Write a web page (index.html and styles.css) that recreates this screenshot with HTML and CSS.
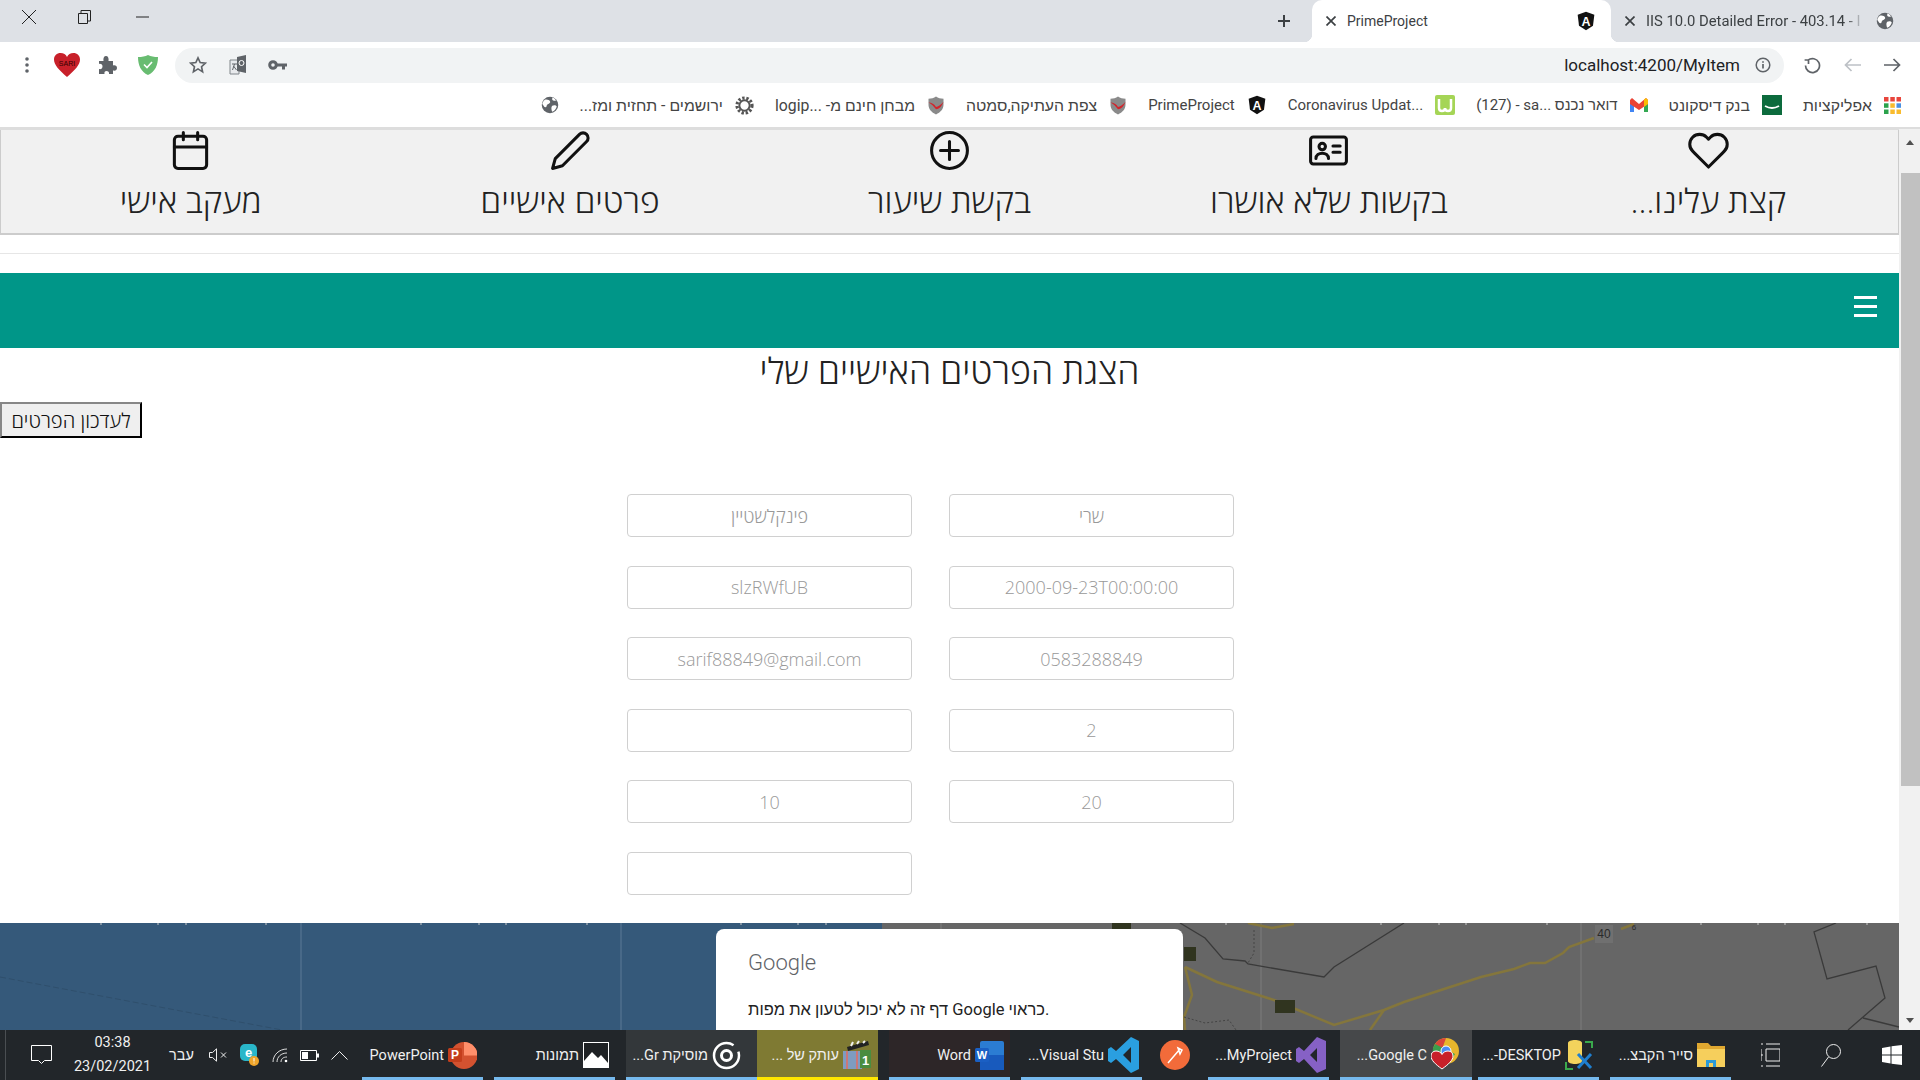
FILE: index.html
```html
<!DOCTYPE html>
<html lang="he">
<head>
    <meta charset="UTF-8">
    <title>PrimeProject</title>
    <link rel="stylesheet" href="styles.css">
</head>
<body>

    <svg class="defs" width="0" height="0">
        <symbol id="globe" viewBox="0 0 24 24">
            <circle cx="12" cy="12" r="11" fill="#5f6368"/>
            <path d="M5 5c3-1 6 0 7 2s-1 3-3 4-1 4-3 4-3-3-4-4 1-4 3-6zM15 13c2-1 5-1 6 1-1 3-3 6-6 7-1-2-2-6 0-8zM15 2c2 0 4 2 5 4-2 1-4 0-5-1z" fill="#fff"/>
        </symbol>
        <symbol id="bird" viewBox="0 0 24 24">
            <path d="M2 3c4 0 7-1 10-3 3 2 6 3 10 3v8c0 6-4 10-10 13C6 21 2 17 2 11z" fill="#8a8a8a"/>
            <path d="M2 8c4 0 8 2 10 6 3-1 6-2 10-7-2 6-6 10-10 10C9 13 6 10 2 8z" fill="#d3232a"/>
        </symbol>
    </svg>

    <div class="tabstrip">
        <div class="win-controls">
            <svg class="win-close" width="14" height="14" viewBox="0 0 14 14"><path d="M0 0l14 14M14 0 0 14" stroke="#222" fill="none"/></svg>
            <svg class="win-restore" width="13" height="14" viewBox="0 0 13 14"><path d="M.5 3.500h9v10h-9zM3 3.500V.5h9.500V11H9.500" stroke="#222" fill="none"/></svg>
            <svg class="win-min" width="13" height="2" viewBox="0 0 13 2"><path d="M0 1h13" stroke="#222" fill="none"/></svg>
        </div>
        <svg class="new-tab" width="14" height="14" viewBox="0 0 14 14"><path d="M7 1v12M1 7h12" stroke="#3c4043" stroke-width="2" fill="none"/></svg>
        <div class="tab tab-active">
            <svg class="tab-x" width="10" height="10" viewBox="0 0 10 10"><path d="M.5.500l9 9M9.500.500l-9 9" stroke="#3c4043" stroke-width="1.700" fill="none"/></svg>
            <span class="tab-title">PrimeProject</span>
            <svg class="tab-icon" width="20" height="20" viewBox="0 0 24 24"><path d="M12 1 2 4.600l1.600 13L12 23l8.400-5.400 1.600-13z" fill="#111"/><text x="12" y="17.500" text-anchor="middle" font-family="Liberation Sans" font-weight="700" font-size="15" fill="#fff">A</text></svg>
        </div>
        <div class="tab tab-other">
            <svg class="tab-x" width="10" height="10" viewBox="0 0 10 10"><path d="M.5.500l9 9M9.500.500l-9 9" stroke="#3c4043" stroke-width="1.700" fill="none"/></svg>
            <span class="tab-title tab-fade">IIS 10.0 Detailed Error - 403.14 - I</span>
            <svg class="tab-icon" width="18" height="18"><use href="#globe"/></svg>
        </div>
    </div>

    <div class="toolbar">
        <div class="ext-icons">
            <svg width="4" height="16" viewBox="0 0 4 16"><circle cx="2" cy="2" r="1.800" fill="#5f6368"/><circle cx="2" cy="8" r="1.800" fill="#5f6368"/><circle cx="2" cy="14" r="1.800" fill="#5f6368"/></svg>
            <svg class="ext-heart" width="26" height="24" viewBox="0 0 26 24"><path d="M13 24C5 17 0 12 0 6.500 0 2.500 3 0 6.500 0 9.500 0 12 1.500 13 4c1-2.500 3.500-4 6.500-4C23 0 26 2.500 26 6.500 26 12 21 17 13 24z" fill="#c8202a"/><text x="13" y="13" text-anchor="middle" font-family="Liberation Sans" font-size="7" fill="#300">SARI</text></svg>
            <svg class="ext-puzzle" width="18" height="18" viewBox="0 0 18 18"><path d="M0 5h4.500C4 2 5 0 7 0s3 2 2.500 5H14v4.500c2.500-.5 4 .5 4 2.500s-1.500 3-4 2.500V18h-4c.5-2-1-3-2.500-3S5 16 5.500 18H0v-5c2 .5 3.500-.5 3.500-2.500S2 7.500 0 8z" fill="#5f6368"/></svg>
            <svg class="ext-shield" width="20" height="20" viewBox="0 0 20 20"><path d="M10 0c3 1.500 6 2 10 2 0 8-3 15-10 18C3 17 0 10 0 2c4 0 7-.5 10-2z" fill="#68bc71"/><path d="M6 9.500l3 3 5-5.500" stroke="#fff" stroke-width="1.600" fill="none"/></svg>
        </div>
        <div class="omnibox">
            <svg class="omni-star" width="18" height="18" viewBox="0 0 24 24"><path d="M12 2.500l2.900 6.300 6.900.8-5.100 4.700 1.400 6.800L12 17.200l-6.100 3.900 1.400-6.800-5.100-4.700 6.900-.8z" stroke="#5f6368" stroke-width="2.200" fill="none"/></svg>
            <svg class="omni-translate" width="18" height="20" viewBox="0 0 18 20"><path d="M1 5h9v14H1z" fill="#e8eaed" stroke="#80868b"/><path d="M8 2l9-2v18l-9-2z" fill="#5f6368"/><circle cx="12.500" cy="8" r="2.500" fill="none" stroke="#fff"/><path d="M3 9h5M5.500 9l-2 6M4.500 11l3 4" stroke="#5f6368" fill="none"/></svg>
            <svg class="omni-key" width="19" height="10" viewBox="0 0 19 10"><circle cx="5" cy="5" r="3.300" fill="none" stroke="#5f6368" stroke-width="3"/><path d="M8 3.500h11v3h-2v3h-3v-3H8z" fill="#5f6368"/></svg>
            <span class="url">localhost:4200/MyItem</span>
            <svg class="omni-info" width="16" height="16" viewBox="0 0 16 16"><circle cx="8" cy="8" r="6.800" fill="none" stroke="#5f6368" stroke-width="1.500"/><path d="M8 7v4.500M8 4.200v1.600" stroke="#5f6368" stroke-width="1.700" fill="none"/></svg>
        </div>
        <div class="nav-buttons">
            <svg width="17" height="17" viewBox="0 0 17 17"><path d="M4 3.200A7 7 0 1 1 1.500 8.500M4.500 7V3H.6" stroke="#5f6368" stroke-width="1.700" fill="none"/></svg>
            <svg width="17" height="14" viewBox="0 0 17 14"><path d="M17 7H1.500M7.500 1 1.500 7l6 6" stroke="#bdc1c6" stroke-width="1.700" fill="none"/></svg>
            <svg width="17" height="14" viewBox="0 0 17 14"><path d="M0 7h15.500M9.500 1l6 6-6 6" stroke="#5f6368" stroke-width="1.700" fill="none"/></svg>
        </div>
    </div>

    <div class="bookmarks">
        <svg class="bm-globe" width="18" height="18"><use href="#globe"/></svg>
        <div class="bm"><span dir="rtl">ירושמים - תחזית ומז...</span>
            <svg width="19" height="19" viewBox="0 0 24 24"><circle cx="12" cy="12" r="6.500" fill="none" stroke="#555" stroke-width="2.500"/><circle cx="12" cy="12" r="9.500" fill="none" stroke="#555" stroke-width="4" stroke-dasharray="3 2.200"/></svg>
        </div>
        <div class="bm"><span dir="rtl">מבחן חינם מ- ...logip</span>
            <svg width="18" height="19"><use href="#bird"/></svg>
        </div>
        <div class="bm"><span dir="rtl">צפת העתיקה,סמטה</span>
            <svg width="18" height="19"><use href="#bird"/></svg>
        </div>
        <div class="bm"><span>PrimeProject</span>
            <svg width="20" height="20" viewBox="0 0 24 24"><path d="M12 1 2 4.600l1.600 13L12 23l8.400-5.400 1.600-13z" fill="#111"/><text x="12" y="17.500" text-anchor="middle" font-family="Liberation Sans" font-weight="700" font-size="15" fill="#fff">A</text></svg>
        </div>
        <div class="bm"><span>Coronavirus Updat...</span>
            <svg width="20" height="20" viewBox="0 0 20 20"><rect width="20" height="20" rx="2" fill="#a5d556"/><path d="M4 4v9q0 3 3 3t3-3q0 3 3 3t3-3V4" fill="none" stroke="#fff" stroke-width="2.500"/></svg>
        </div>
        <div class="bm"><span>(127) - sa... דואר נכנס</span>
            <svg width="18" height="14" viewBox="0 0 18 14"><path d="M0 2v12h4V6z" fill="#4285f4"/><path d="M18 2v12h-4V6z" fill="#34a853"/><path d="M0 2l2-2 7 6 7-6 2 2v4l-9 6-9-6z" fill="#ea4335"/><path d="M14 1.500 16 0l2 2v4l-4 3z" fill="#fbbc04"/></svg>
        </div>
        <div class="bm"><span dir="rtl">בנק דיסקונט</span>
            <svg width="20" height="20" viewBox="0 0 20 20"><rect width="20" height="20" fill="#0c6b3d"/><path d="M3 11q7 4 14 0" stroke="#fff" stroke-width="1.800" fill="none"/></svg>
        </div>
        <div class="bm"><span dir="rtl">אפליקציות</span>
            <svg width="17" height="17" viewBox="0 0 17 17"><path d="M0 0h4.500v4.500H0z" fill="#e8453c"/><path d="M6.300 0h4.500v4.500H6.300z" fill="#e8453c"/><path d="M12.500 0H17v4.500h-4.500z" fill="#e8453c"/><path d="M0 6.300h4.500v4.500H0z" fill="#2ba24c"/><path d="M6.300 6.300h4.500v4.500H6.300z" fill="#f9bb2d"/><path d="M12.500 6.300H17v4.500h-4.500z" fill="#4a90e2"/><path d="M0 12.500h4.500V17H0z" fill="#2ba24c"/><path d="M6.300 12.500h4.500V17H6.300z" fill="#f9bb2d"/><path d="M12.500 12.500H17V17h-4.500z" fill="#f9bb2d"/></svg>
        </div>
    </div>

    <div class="viewport">
        <div class="page">
            <nav class="topnav" dir="rtl">
                <a class="topnav-item">
                    <svg class="topnav-icon" viewBox="0 0 24 24"><path d="M20.840 4.610a5.500 5.500 0 0 0-7.780 0L12 5.670l-1.060-1.060a5.500 5.500 0 0 0-7.780 7.780l1.060 1.060L12 21.230l7.780-7.780 1.060-1.060a5.500 5.500 0 0 0 0-7.780z"/></svg>
                    <span>קצת עלינו...</span>
                </a>
                <a class="topnav-item">
                    <svg class="topnav-icon" viewBox="0 0 24 24"><rect x="2" y="4.500" width="20" height="15" rx="1.500"/><circle cx="8.500" cy="9.800" r="1.800"/><path d="M5 16.500c0-4 7-4 7 0M14.500 9.500h4M14.500 13h4"/></svg>
                    <span>בקשות שלא אושרו</span>
                </a>
                <a class="topnav-item">
                    <svg class="topnav-icon" viewBox="0 0 24 24"><circle cx="12" cy="12" r="10"/><path d="M12 7v10M7 12h10"/></svg>
                    <span>בקשת שיעור</span>
                </a>
                <a class="topnav-item">
                    <svg class="topnav-icon" viewBox="0 0 24 24"><path d="M17 3a2.828 2.828 0 1 1 4 4L7.500 20.500 2 22l1.500-5.500L17 3z"/></svg>
                    <span>פרטים אישיים</span>
                </a>
                <a class="topnav-item">
                    <svg class="topnav-icon" viewBox="0 0 24 24"><rect x="3" y="4" width="18" height="18" rx="2"/><path d="M16 2v4M8 2v4M3 10h18"/></svg>
                    <span>מעקב אישי</span>
                </a>
            </nav>
            <hr class="divider">
            <div class="teal-bar">
                <div class="burger"><span></span><span></span><span></span></div>
            </div>
            <h2 class="title">הצגת הפרטים האישיים שלי</h2>
            <button class="update-btn">לעדכון הפרטים</button>

            <div class="form-grid" dir="rtl">
                <div class="field">שרי</div>
                <div class="field">פינקלשטיין</div>
                <div class="field">2000-09-23T00:00:00</div>
                <div class="field">slzRWfUB</div>
                <div class="field">0583288849</div>
                <div class="field">sarif88849@gmail.com</div>
                <div class="field">2</div>
                <div class="field"></div>
                <div class="field">20</div>
                <div class="field">10</div>
                <div class="field field-last"></div>
            </div>

            <div class="map">
                <svg class="map-art" width="1901" height="107" viewBox="0 0 1901 107">
                    <rect width="882" height="107" fill="#35597a"/>
                    <rect x="882" width="1019" height="107" fill="#666"/>
                    <path d="M301 0v107M621 0v107" stroke="#5d7b96" fill="none"/>
                    <path d="M941 0v107M1261 0v107M1581 0v107" stroke="#7d7d7d" fill="none"/>
                    <path d="M0 54 282 107" stroke="#2f4f6c" stroke-dasharray="6 3" fill="none"/>
                    <path d="M101 0v2M158 0v2M186 0v2M266 0v2M421 0v2M479 0v2M506 0v2M587 0v2M741 0v2M798 0v2M826 0v2M1226 0v2M1381 0v2M1439 0v2M1466 0v2M1547 0v2M1701 0v2M1758 0v2M1785 0v2M1867 0v2" stroke="#c8c8c8" fill="none"/>
                    <path d="M1180 0l25 15 18 21 22 2 3 3 76 13 10-10 70-44M1836 0l-22 9 13 47 49-13 9 32-37 32M1863 95l36 9" stroke="#3a3a3a" stroke-width="1.300" fill="none"/>
                    <path d="M1185 44l32 15 57 18 60 25 50-15 20-8 77-25 33-8 16-6h15l18-10 6-6 25-9M1621 6l13-5M1185 44l7 28-8 22 1 13M1384 87l-14 20M1248 0l24 5 22-4" stroke="#84763c" stroke-width="2.500" fill="none"/>
                    <path d="M1254 7v23l-6 10M1184 94l21 6 24-3 7 10" stroke="#444" stroke-dasharray="2 2" fill="none"/>
                    <path d="M1275 77h20v13h-20zM1184 24h12v14h-12zM1112 0h19v7h-19z" fill="#30341f"/>
                    <rect x="1595" y="2" width="18" height="18" fill="#707070"/>
                    <text x="1604" y="15" text-anchor="middle" font-family="Liberation Sans" font-size="12" fill="#2a2a2a">40</text>
                    <text x="1634" y="7" text-anchor="middle" font-family="Liberation Sans" font-size="8" fill="#2a2a2a">6</text>
                </svg>
                <div class="maps-dialog">
                    <div class="maps-logo">Google</div>
                    <p class="maps-msg">דף זה לא יכול לטעון את מפות Google כראוי.</p>
                </div>
            </div>
        </div>
        <div class="scrollbar">
            <div class="scroll-up"></div>
            <div class="scroll-thumb"></div>
            <div class="scroll-down"></div>
        </div>
    </div>

    <div class="taskbar">
        <div class="tray">
            <svg class="tray-note" width="21" height="20" viewBox="0 0 21 20"><path d="M.5.5h20v15h-7l-3 3-3-3h-7z" stroke="#fff" fill="none"/></svg>
            <div class="clock"><span>03:38</span><span>23/02/2021</span></div>
            <span class="tray-lang">עבר</span>
            <svg class="tray-vol" width="19" height="14" viewBox="0 0 19 14"><path d="M.5 4.500h3L7.500.8v12.400l-4-3.700h-3zM12 4.500l5 5M17 4.500l-5 5" stroke="#eee" fill="none"/></svg>
            <svg class="tray-eset" width="19" height="22" viewBox="0 0 19 22"><rect width="17" height="17" rx="5" fill="#29b6c9"/><text x="8.500" y="13" text-anchor="middle" font-family="Liberation Sans" font-weight="700" font-size="13" fill="#fff">e</text><circle cx="14" cy="17" r="5" fill="#f0a52a"/><path d="M14 14v3.500M14 18.500v1" stroke="#fff" fill="none"/></svg>
            <svg class="tray-wifi" width="16" height="15" viewBox="0 0 16 15"><path d="M1 14C1 7 7 1 15 1M5 14c0-5 4-9 10-9M9 14c0-3 2-5 6-5" stroke="#ddd" fill="none"/><circle cx="14" cy="13" r="1.300" fill="#fff"/></svg>
            <svg class="tray-batt" width="19" height="11" viewBox="0 0 19 11"><path d="M.5.500h16v10H.5z" stroke="#fff" fill="none"/><path d="M2 2h6v7H2z" fill="#fff"/><path d="M17 3.500h2v4h-2z" fill="#fff"/></svg>
            <svg class="tray-up" width="17" height="9" viewBox="0 0 17 9"><path d="M.5 8.500l8-8 8 8" stroke="#eee" fill="none"/></svg>
        </div>

        <div class="task"><span>PowerPoint</span>
            <svg width="29" height="29" viewBox="0 0 29 29"><circle cx="16" cy="14.500" r="13.500" fill="#d35230"/><path d="M16 14.500V1a13.500 13.500 0 0 1 13.500 13.500z" fill="#ff8f6b"/><rect y="7" width="14" height="14" rx="1.500" fill="#c43e1c"/><text x="7" y="18" text-anchor="middle" font-family="Liberation Sans" font-weight="700" font-size="12" fill="#fff">P</text></svg>
        </div>
        <div class="task"><span>תמונות</span>
            <svg width="26" height="26" viewBox="0 0 26 26"><rect width="26" height="26" fill="#fff"/><rect x="1" y="1" width="24" height="24" fill="#1e2124"/><path d="M1 25V19L9 10l6 6 3-3 7 8v4z" fill="#fff"/></svg>
        </div>
        <div class="task task-open"><span dir="rtl">מוסיקת Gr...</span>
            <svg width="29" height="29" viewBox="0 0 29 29"><circle cx="14.500" cy="14.500" r="12.500" fill="none" stroke="#fff" stroke-width="2.500" stroke-dasharray="66 8"/><circle cx="14.500" cy="14.500" r="5" fill="none" stroke="#fff" stroke-width="3"/></svg>
        </div>
        <div class="task task-flash"><span dir="rtl">עותק של ...</span>
            <svg width="28" height="30" viewBox="0 0 28 30"><path d="M4 7 25 1l1 4L5 11z" fill="#222"/><path d="M8 6l2-4M14 4l2-3M20 3l2-2" stroke="#eee" stroke-width="2" fill="none"/><rect y="11" width="19" height="18" fill="#7e9cc0"/><path d="M4 11v18M14 11v18" stroke="#c77" stroke-width="2" fill="none"/><rect x="17" y="10" width="11" height="18" fill="#4a8c3f"/><text x="22.500" y="25" text-anchor="middle" font-family="Liberation Sans" font-weight="700" font-size="13" fill="#fff">1</text></svg>
        </div>
        <div class="task task-word"><span>Word</span>
            <svg width="29" height="29" viewBox="0 0 29 29"><rect x="5" width="24" height="29" rx="2" fill="#2b7cd3"/><rect x="5" y="14" width="24" height="15" fill="#185abd"/><rect y="7" width="14" height="14" rx="1.500" fill="#1a5fc4"/><text x="7" y="18" text-anchor="middle" font-family="Liberation Sans" font-weight="700" font-size="11" fill="#fff">W</text></svg>
        </div>
        <div class="task task-tight"><span dir="rtl">Visual Stu...</span>
            <svg width="31" height="36" viewBox="0 0 31 36"><path d="M23 0 31 4v28l-8 4L8 22l-5 4-3-2v-12l3-2 5 4zM23 10l-8 8 8 8z" fill="#2a9fe0"/></svg>
        </div>
        <div class="task task-icon">
            <svg width="30" height="30" viewBox="0 0 30 30"><circle cx="15" cy="15" r="15" fill="#f26b3a"/><path d="M8 23 20 9M18 8l4 2-2 4z" stroke="#fff" stroke-width="1.500" fill="none"/></svg>
        </div>
        <div class="task task-tight"><span dir="rtl">MyProject...</span>
            <svg width="30" height="36" viewBox="0 0 30 36"><path d="M21 0 30 4v28l-9 4L8 22l-5 4-3-2V12l3-2 5 4zM21 11l-7 7 7 7z" fill="#8661c5"/></svg>
        </div>
        <div class="task task-active"><span dir="rtl">Google C...</span>
            <svg width="28" height="36" viewBox="0 0 28 36"><circle cx="15" cy="14" r="13" fill="#e8b62c"/><path d="M15 1a13 13 0 0 0-11 6l6 8z" fill="#d9453a"/><path d="M4 7a13 13 0 0 0 14 20l6-10z" fill="#3c9e4c"/><circle cx="15" cy="14" r="5" fill="#4c8bf5" stroke="#fff"/><path d="M11 32C4 27 0 23 0 19c0-3 2-5 5-5 3 0 5 1.500 6 3.500 1-2 3-3.500 6-3.500 3 0 5 2 5 5 0 4-4 8-11 13z" fill="#c8202a" stroke="#fff"/></svg>
        </div>
        <div class="task"><span dir="rtl">DESKTOP-...</span>
            <svg width="28" height="30" viewBox="0 0 28 30"><path d="M3 3c0-4 14-4 14 0v18c0 4-14 4-14 0z" fill="#f3d35c"/><path d="M20 2h7v6M1 22v7h7" stroke="#3aa94c" stroke-width="2" fill="none"/><path d="M13 14l13 14M26 14 13 28" stroke="#1f7fcf" stroke-width="3" fill="none"/></svg>
        </div>
        <div class="task"><span dir="rtl">סייר הקבצ...</span>
            <svg width="28" height="24" viewBox="0 0 28 24"><path d="M0 0h11l3 3h14v21H0z" fill="#e0a830"/><path d="M0 6h28v18H0z" fill="#f6cf5c"/><path d="M9 24v-7h10v7h-3v-4h-4v4z" fill="#2b9ad8"/></svg>
        </div>

        <div class="sys-icons">
            <svg width="19" height="24" viewBox="0 0 19 24"><path d="M0 1h2M0 12h2M0 23h2M0 6v12M5 1h14M5 23h14M5 6h14v12H5z" stroke="#eee" fill="none"/></svg>
            <svg width="20" height="23" viewBox="0 0 20 23"><circle cx="12.500" cy="7.500" r="7" stroke="#eee" fill="none"/><path d="M7.500 13 .5 22.500" stroke="#eee" fill="none"/></svg>
            <svg width="20" height="20" viewBox="0 0 20 20"><path d="M0 3l8.500-1.500V9.500H0zM9.500 1.300 20 0v9.500H9.500zM0 10.500h8.500v8L0 17zM9.500 10.500H20V20L9.500 18.700z" fill="#fff"/></svg>
        </div>
    </div>

</body>
</html>
```

FILE: styles.css
```css
* {
    box-sizing: border-box;
}

html, body {
    margin: 0;
    height: 100%;
}

body {
    width: 1920px;
    height: 1080px;
    overflow: hidden;
    display: flex;
    flex-direction: column;
    background: #fff;
    font-family: "Open Sans", "Liberation Sans", sans-serif;
    color: #222;
}

.defs {
    position: absolute;
}

/* browser chrome */
.tabstrip {
    height: 42px;
    flex: none;
    display: flex;
    align-items: center;
    background: #dee1e6;
    font-family: Roboto, "Liberation Sans", sans-serif;
}

.win-controls {
    width: 1277px;
    display: flex;
    align-items: center;
    padding-left: 22px;
    margin-top: -8px;
}

.win-restore {
    margin-left: 42px;
}

.win-min {
    margin-left: 45px;
}

.tab {
    height: 42px;
    display: flex;
    align-items: center;
    font-size: 14px;
    color: #3c4043;
}

.tab-active {
    position: relative;
    width: 299px;
    margin-left: 21px;
    padding: 0 15px 0 14px;
    background: #fff;
    border-radius: 10px 10px 0 0;
}

/* little flares at the bottom corners of the open tab */
.tab-active::before,
.tab-active::after {
    content: "";
    position: absolute;
    bottom: 0;
    width: 8px;
    height: 8px;
}

.tab-active::before {
    left: -8px;
    background: radial-gradient(circle at 0 0, transparent 8px, #fff 8.5px);
}

.tab-active::after {
    right: -8px;
    background: radial-gradient(circle at 100% 0, transparent 8px, #fff 8.5px);
}

.tab-other {
    width: 290px;
    padding: 0 7px 0 14px;
    font-size: 14.8px;
}

.tab-x {
    flex: none;
    margin-right: 11px;
}

.tab-title {
    flex: 1;
    white-space: nowrap;
}

.tab-fade {
    -webkit-mask-image: linear-gradient(to right, #000 92%, transparent);
    mask-image: linear-gradient(to right, #000 92%, transparent);
}

.tab-icon {
    flex: none;
    margin-left: 12px;
}

.toolbar {
    height: 46px;
    flex: none;
    display: flex;
    align-items: center;
    background: #fff;
}

.ext-icons {
    width: 175px;
    display: flex;
    align-items: center;
    padding-left: 25px;
}

.ext-heart {
    margin-left: 25px;
}

.ext-puzzle {
    margin-left: 19px;
}

.ext-shield {
    margin-left: 21px;
}

.omnibox {
    width: 1609px;
    height: 35px;
    display: flex;
    align-items: center;
    padding: 0 13px 0 14px;
    background: #f1f3f4;
    border-radius: 18px;
}

.omni-translate {
    margin-left: 22px;
}

.omni-key {
    margin-left: 21px;
}

.url {
    margin-left: auto;
    font-family: Roboto, "Liberation Sans", sans-serif;
    font-size: 17px;
    color: #202124;
}

.omni-info {
    margin-left: 15px;
}

.nav-buttons {
    flex: 1;
    display: flex;
    align-items: center;
    padding-left: 20px;
    gap: 23px;
}

.bookmarks {
    height: 39px;
    flex: none;
    display: flex;
    align-items: center;
    justify-content: flex-end;
    gap: 21px;
    padding: 0 19px 5px 0;
    background: #fff;
    font-family: Roboto, "Liberation Sans", sans-serif;
    font-size: 15px;
    color: #444;
}

.bm {
    display: flex;
    align-items: center;
    gap: 12px;
    white-space: nowrap;
}

.bm span[dir="rtl"] {
    font-size: 15.8px;
}

/* page */
.viewport {
    flex: 1;
    min-height: 0;
    display: flex;
    border-top: 3px solid #ddd;
}

.page {
    width: 1899px;
    flex: none;
    display: flex;
    flex-direction: column;
}

.topnav {
    height: 105px;
    flex: none;
    display: grid;
    grid-template-columns: repeat(5, 1fr);
    background: #f1f1f1;
    border: 1px solid #ccc;
    border-top: 0;
    border-bottom-width: 2px;
}

.topnav-item {
    display: flex;
    flex-direction: column;
    align-items: center;
    margin-top: -1px;
    font-size: 33.5px;
    line-height: 44px;
    font-weight: 300;
    color: #222;
}

.topnav-icon {
    width: 43px;
    height: 43px;
    fill: none;
    stroke: #111;
    stroke-width: 1.700;
    stroke-linejoin: round;
    stroke-linecap: round;
}

.topnav-item span {
    margin-top: 6px;
}

.divider {
    width: 100%;
    height: 1px;
    margin: 18px 0 19px;
    border: 0;
    background: #e6e6e6;
}

.teal-bar {
    height: 75px;
    flex: none;
    display: flex;
    justify-content: flex-end;
    padding: 23px 22px 0 0;
    background: #009688;
}

.burger {
    width: 23px;
    height: 21px;
    display: flex;
    flex-direction: column;
    justify-content: space-between;
}

.burger span {
    height: 3px;
    background: #fff;
}

.title {
    margin: 0 0 2px;
    text-align: center;
    font-size: 35.7px;
    line-height: 44px;
    font-weight: 300;
    color: #222;
}

.update-btn {
    align-self: flex-start;
    width: 142px;
    height: 36px;
    margin-top: 8px;
    padding: 0;
    background: #efefef;
    border: 2px outset #333;
    font-family: inherit;
    font-size: 20.200px;
    font-weight: 300;
    color: #111;
}

.form-grid {
    width: 607px;
    margin: 56px 0 0 627px;
    display: grid;
    grid-template-columns: 285px 285px;
    column-gap: 37px;
    row-gap: 28.5px;
}

.field {
    height: 43px;
    display: flex;
    align-items: center;
    justify-content: center;
    border: 1px solid #d0d0d0;
    border-radius: 4px;
    font-size: 18px;
    font-weight: 300;
    color: #999;
}

.field-last {
    grid-column: 2;
}

.map {
    position: relative;
    flex: 1;
    min-height: 0;
    margin-top: 28.5px;
    overflow: hidden;
}

.map-art {
    display: block;
}

.maps-dialog {
    position: absolute;
    left: 716px;
    top: 6px;
    width: 467px;
    height: 200px;
    padding: 20px 32px;
    background: #fff;
    border-radius: 8px;
}

.maps-logo {
    font-family: Roboto, sans-serif;
    font-size: 22px;
    line-height: 28px;
    font-weight: 300;
    color: #5f6368;
}

.maps-msg {
    margin: 23px 0 0;
    font-family: Roboto, "Liberation Sans", sans-serif;
    font-size: 16.500px;
    color: #222;
}

.scrollbar {
    flex: 1;
    display: flex;
    flex-direction: column;
    align-items: flex-end;
    background: #f1f1f1;
    margin-top: -1px;
}

.scroll-up {
    width: 0;
    height: 0;
    margin: 11px 6px 28px;
    border: 4px solid transparent;
    border-top: 0;
    border-bottom: 5px solid #505050;
}

.scroll-thumb {
    width: 19px;
    height: 613px;
    background: #c1c1c1;
}

.scroll-down {
    width: 0;
    height: 0;
    margin: auto 6px 7px;
    border: 4px solid transparent;
    border-bottom: 0;
    border-top: 5px solid #505050;
}

/* windows taskbar */
.taskbar {
    height: 50px;
    flex: none;
    display: flex;
    background: #22262a;
    font-family: Roboto, "Liberation Sans", sans-serif;
    font-size: 14.500px;
    color: #f0f0f0;
}

.tray {
    width: 357px;
    flex: none;
    display: flex;
    align-items: center;
    margin-left: 5px;
    padding-left: 25px;
    border-left: 1px solid #4a4e52;
}

.clock {
    width: 75px;
    margin-left: 23px;
    display: flex;
    flex-direction: column;
    align-items: center;
    line-height: 24px;
}

.tray-lang {
    margin-left: 19px;
}

.tray-vol {
    margin-left: 15px;
}

.tray-eset {
    margin-left: 12px;
}

.tray-wifi {
    margin-left: 13px;
}

.tray-batt {
    margin-left: 12px;
}

.tray-up {
    margin-left: 12px;
}

.task {
    width: 121px;
    flex: none;
    margin-right: 11px;
    padding: 3px 6px 0 0;
    display: flex;
    align-items: center;
    justify-content: flex-end;
    gap: 4px;
    white-space: nowrap;
    border-bottom: 3px solid #76b9ed;
}

.task-open {
    background: #33373a;
    margin-right: 0;
    width: 131px;
    padding-right: 16px;
}

.task-flash {
    background: #7f7a33;
    border-bottom-color: #ffe600;
    padding-right: 7px;
}

.task-word {
    background: #2d2628;
}

.task-tight {
    padding-right: 3px;
}

.task-icon {
    width: 44px;
    padding-right: 7px;
    border-bottom-color: transparent;
}

.task-active {
    width: 132px;
    background: #46484a;
    margin-right: 6px;
    padding-right: 13px;
}

.sys-icons {
    flex: 1;
    display: flex;
    align-items: center;
    padding-left: 19px;
    gap: 41px;
}
```
